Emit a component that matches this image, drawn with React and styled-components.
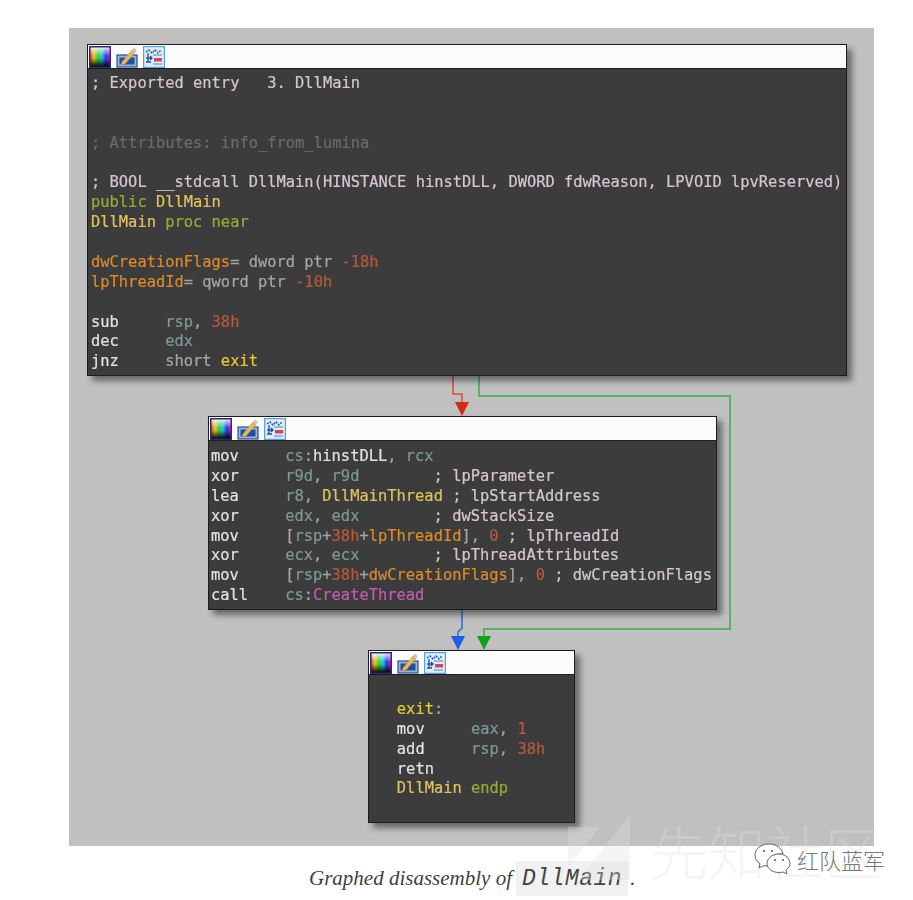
import React, { useId } from "react";
import styled, { createGlobalStyle } from "styled-components";

const Global = createGlobalStyle`
  html, body { margin: 0; padding: 0; background: #fff; }
  body { width: 913px; height: 900px; overflow: hidden; }
`;

const Page = styled.div`
  position: relative;
  width: 913px;
  height: 900px;
  padding: 28px 39px 0 69px;
  box-sizing: border-box;
`;

const Canvas = styled.div`
  position: relative;
  width: 805px;
  height: 818px;
  background: #c0c0c0;
`;

const Node = styled.div`
  position: absolute;
  left: ${(p) => p.$x}px;
  top: ${(p) => p.$y}px;
  width: ${(p) => p.$w}px;
  box-sizing: border-box;
  border: 1px solid #1c1c1c;
  background: #3c3c3c;
  box-shadow: 5px 5px 6px rgba(0, 0, 0, 0.45);
`;

const TitleBar = styled.div`
  display: flex;
  align-items: center;
  gap: 5px;
  height: 23px;
  padding-left: 1px;
  background: #fbfbfb;
  border-bottom: 1px solid #1c1c1c;
  filter: blur(0.35px);
`;

const Listing = styled.pre`
  margin: 0;
  padding: ${(p) => p.$top}px 2px ${(p) => p.$bottom}px ${(p) => p.$left}px;
  font-family: "DejaVu Sans Mono", "Liberation Mono", monospace;
  font-size: 15.42px;
  line-height: 19.87px;
  font-weight: 400;
  color: #d0c4cc;
  filter: blur(0.4px);
  -webkit-text-stroke: 0.2px currentColor;
`;

const tones = {
  note: "#d6c6d2",
  faint: "#6b6b6b",
  key: "#98aa3c",
  name: "#e0c25c",
  data: "#dc8a2c",
  plain: "#a6a6a6",
  reg: "#7c9a98",
  num: "#b8593e",
  op: "#e2e2e2",
  label: "#e6c83a",
  ext: "#c45cb4",
};

const Tok = styled.span`
  color: ${(p) => tones[p.$t]};
`;

const Edges = styled.svg`
  position: absolute;
  left: 0;
  top: 0;
  width: 805px;
  height: 818px;
  pointer-events: none;
  filter: blur(0.3px);
`;

const Caption = styled.figcaption`
  display: flex;
  align-items: center;
  height: 47px;
  margin-top: 9px;
  padding-left: 240px;
  font-family: "Liberation Serif", Georgia, serif;
  font-style: italic;
  font-size: 21px;
  color: #3f3f3f;
`;

const InlineCode = styled.code`
  display: inline-block;
  margin: 0 2px 0 4px;
  padding: 0 6px;
  height: 35px;
  line-height: 36px;
  background: #f1f1f1;
  font-family: "Liberation Mono", monospace;
  font-style: italic;
  font-size: 23px;
  letter-spacing: 0.5px;
  color: #444;
`;

const WatermarkLogo = styled.svg`
  position: absolute;
  left: 566px;
  top: 812px;
  width: 66px;
  height: 72px;
`;

const WatermarkText = styled.div`
  position: absolute;
  left: 650px;
  top: 814px;
  font-family: "Noto Sans CJK SC", sans-serif;
  font-weight: 300;
  font-size: 58px;
  line-height: 72px;
  white-space: nowrap;
  color: rgba(225, 225, 225, 0.32);
`;

const Brand = styled.div`
  position: absolute;
  left: 754px;
  top: 842px;
  display: flex;
  align-items: center;
  gap: 6px;
`;

const BrandName = styled.span`
  font-family: "Noto Sans CJK SC", sans-serif;
  font-weight: 300;
  font-size: 22px;
  line-height: 34px;
  color: #777;
`;

const PaletteIcon = () => {
  const id = useId();
  return (
    <svg width="22" height="22" viewBox="0 0 22 22">
      <defs>
        <linearGradient id={id + "h"} x1="0" x2="1" y1="0" y2="0">
          <stop offset="0" stopColor="#e8392c" />
          <stop offset="0.2" stopColor="#e8c820" />
          <stop offset="0.4" stopColor="#30d040" />
          <stop offset="0.6" stopColor="#20c8d8" />
          <stop offset="0.8" stopColor="#3030e8" />
          <stop offset="1" stopColor="#d820c8" />
        </linearGradient>
        <linearGradient id={id + "v"} x1="0" x2="0" y1="0" y2="1">
          <stop offset="0" stopColor="#fff" stopOpacity="0.9" />
          <stop offset="0.45" stopColor="#fff" stopOpacity="0" />
          <stop offset="0.55" stopColor="#000" stopOpacity="0" />
          <stop offset="1" stopColor="#000" stopOpacity="1" />
        </linearGradient>
      </defs>
      <rect x="1" y="1" width="20" height="20" fill={`url(#${id}h)`} />
      <rect x="1" y="1" width="20" height="20" fill={`url(#${id}v)`} />
      <rect x="0.75" y="0.75" width="20.5" height="20.5" fill="none" stroke="#2a2a78" strokeWidth="1.5" />
    </svg>
  );
};

const PencilIcon = () => (
  <svg width="22" height="22" viewBox="0 0 22 22">
    <rect x="1" y="9" width="20" height="12" fill="#9cb4d4" stroke="#2f4f8f" strokeWidth="1.2" />
    <rect x="3.5" y="11.5" width="15" height="7" fill="#1f4f9f" />
    <path d="M6 16 L16 4 L19 6.5 L9 18 L5 19 Z" fill="#e8b860" stroke="#c89030" strokeWidth="0.6" />
    <path d="M16 4 L18 1.5 L21 4 L19 6.5 Z" fill="#b8c8d8" />
  </svg>
);

const GraphIcon = () => (
  <svg width="22" height="22" viewBox="0 0 22 22">
    <rect x="0.6" y="0.6" width="20.8" height="20.8" fill="#dcecf8" stroke="#58a0e0" strokeWidth="1.2" />
    <path d="M3 6 L6 4 L9 7 L12 4 L15 7 L18 4" fill="none" stroke="#20509a" strokeWidth="1.4" strokeDasharray="2 1" />
    <path d="M5 7 V16 M3 12 H9 M7 10 L9 12 L7 14 M3 16 H8" fill="none" stroke="#20509a" strokeWidth="1.3" />
    <rect x="11" y="12" width="8" height="3.5" fill="#d04858" />
    <path d="M10 9 H19 M10 18 H19" stroke="#5080c0" strokeWidth="1" />
  </svg>
);

const Bar = () => (
  <TitleBar>
    <PaletteIcon />
    <PencilIcon />
    <GraphIcon />
  </TitleBar>
);

const Lines = ({ top, bottom, left, rows }) => (
  <Listing $top={top} $bottom={bottom} $left={left}>
    {rows.map((row, i) => (
      <React.Fragment key={i}>
        {row.map(([t, s], j) => (
          <Tok key={j} $t={t}>
            {s}
          </Tok>
        ))}
        {"\n"}
      </React.Fragment>
    ))}
  </Listing>
);

const entry = [
  [["note", "; Exported entry   3. DllMain"]],
  [],
  [],
  [["faint", "; Attributes: info_from_lumina"]],
  [],
  [["note", "; BOOL __stdcall DllMain(HINSTANCE hinstDLL, DWORD fdwReason, LPVOID lpvReserved)"]],
  [["key", "public "], ["name", "DllMain"]],
  [["name", "DllMain "], ["key", "proc near"]],
  [],
  [["data", "dwCreationFlags"], ["plain", "= dword ptr "], ["num", "-18h"]],
  [["data", "lpThreadId"], ["plain", "= qword ptr "], ["num", "-10h"]],
  [],
  [["op", "sub     "], ["reg", "rsp"], ["plain", ", "], ["num", "38h"]],
  [["op", "dec     "], ["reg", "edx"]],
  [["op", "jnz     "], ["plain", "short "], ["label", "exit"]],
];

const thread = [
  [["op", "mov     "], ["reg", "cs"], ["plain", ":"], ["op", "hinstDLL"], ["plain", ", "], ["reg", "rcx"]],
  [["op", "xor     "], ["reg", "r9d"], ["plain", ", "], ["reg", "r9d"], ["note", "        ; lpParameter"]],
  [["op", "lea     "], ["reg", "r8"], ["plain", ", "], ["name", "DllMainThread"], ["note", " ; lpStartAddress"]],
  [["op", "xor     "], ["reg", "edx"], ["plain", ", "], ["reg", "edx"], ["note", "        ; dwStackSize"]],
  [["op", "mov     "], ["plain", "["], ["reg", "rsp"], ["plain", "+"], ["num", "38h"], ["plain", "+"], ["data", "lpThreadId"], ["plain", "], "], ["num", "0"], ["note", " ; lpThreadId"]],
  [["op", "xor     "], ["reg", "ecx"], ["plain", ", "], ["reg", "ecx"], ["note", "        ; lpThreadAttributes"]],
  [["op", "mov     "], ["plain", "["], ["reg", "rsp"], ["plain", "+"], ["num", "38h"], ["plain", "+"], ["data", "dwCreationFlags"], ["plain", "], "], ["num", "0"], ["note", " ; dwCreationFlags"]],
  [["op", "call    "], ["reg", "cs"], ["plain", ":"], ["ext", "CreateThread"]],
];

const exit = [
  [],
  [["label", "   exit"], ["plain", ":"]],
  [["op", "   mov     "], ["reg", "eax"], ["plain", ", "], ["num", "1"]],
  [["op", "   add     "], ["reg", "rsp"], ["plain", ", "], ["num", "38h"]],
  [["op", "   retn"]],
  [["name", "   DllMain "], ["key", "endp"]],
  [],
];

// Edge coordinates are relative to the canvas (page offset 69, 28).
const edge = (pts) => pts.map(([x, y]) => `${x - 69},${y - 28}`).join(" ");
const head = (x, y) => edge([[x - 7, y - 14], [x + 7, y - 14], [x, y]]);

export default function App() {
  return (
    <Page>
      <Global />
      <Canvas>
        <Edges viewBox="0 0 805 818">
          <polyline points={edge([[453, 376], [453, 394], [462, 394], [462, 403]])} fill="none" stroke="#d8503c" strokeWidth="1.6" />
          <polygon points={head(462, 416)} fill="#d82a10" />
          <polyline points={edge([[479, 376], [479, 396], [730, 396], [730, 629], [484, 629], [484, 637]])} fill="none" stroke="#5cb068" strokeWidth="2" />
          <polygon points={head(484, 650)} fill="#12a020" />
          <polyline points={edge([[462, 609], [462, 628], [458, 632], [458, 637]])} fill="none" stroke="#4a80d8" strokeWidth="2" />
          <polygon points={head(458, 650)} fill="#1a60e0" />
        </Edges>
        <Node $x={18} $y={16} $w={760}>
          <Bar />
          <Lines top={5} bottom={3} left={3} rows={entry} />
        </Node>
        <Node $x={139} $y={388} $w={509}>
          <Bar />
          <Lines top={6} bottom={3} left={2} rows={thread} />
        </Node>
        <Node $x={299} $y={622} $w={207}>
          <Bar />
          <Lines top={5} bottom={3} left={0} rows={exit} />
        </Node>
      </Canvas>
      <Caption>
        Graphed disassembly of<InlineCode>DllMain</InlineCode>.
      </Caption>
      <WatermarkLogo viewBox="0 0 66 72">
        <path d="M2 15 L34 15 L2 55 Z M64 3 L64 68 L14 68 L34 40 Z" fill="rgba(225,225,225,0.32)" />
      </WatermarkLogo>
      <WatermarkText>先知社区</WatermarkText>
      <Brand>
        <svg width="37" height="32" viewBox="0 0 37 32">
          <path d="M15 1 C7 1 1 6 1 12 C1 16 3 18.500 6 20.500 L5 25 L10 22.500 C11 23 13 23 14 23 C13.500 15 20 10 29 11 C28 5 22 1 15 1 Z" fill="#fff" stroke="#555" strokeWidth="0.9" />
          <path d="M25 11 C18 11 13 15.500 13 20.500 C13 25.500 18 29.500 25 29.500 C26.500 29.500 28 29.200 29 29 L33 31 L32 27 C34.500 25 36 23 36 20.500 C36 15.500 31 11 25 11 Z" fill="#fff" stroke="#555" strokeWidth="0.9" />
          <circle cx="10" cy="8" r="1.1" fill="#555" />
          <circle cx="18" cy="8" r="1.1" fill="#555" />
          <circle cx="21" cy="17" r="1" fill="#555" />
          <circle cx="29" cy="17" r="1" fill="#555" />
        </svg>
        <BrandName>红队蓝军</BrandName>
      </Brand>
    </Page>
  );
}
